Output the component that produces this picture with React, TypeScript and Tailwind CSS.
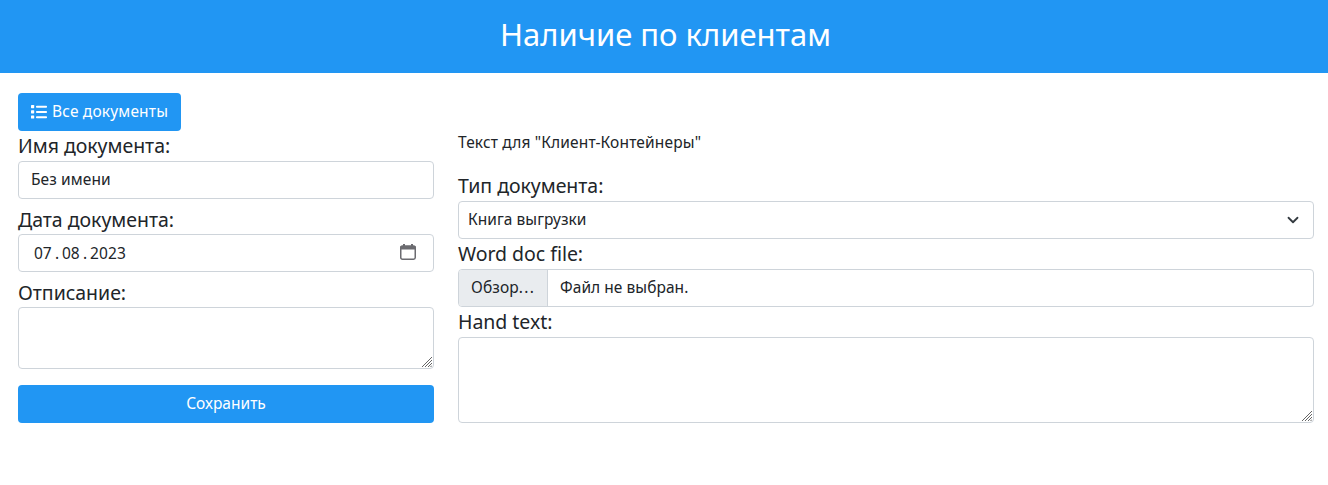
import type { ReactNode } from 'react';

const control = 'w-full rounded-[4px] border border-[#ced4da] bg-white text-[15.5px] text-[#212529]';

function Label({ children, className = '' }: { children: ReactNode; className?: string }) {
  return <label className={`block h-[30px] text-[19.5px] leading-[30px] tracking-[-0.03px] whitespace-nowrap ${className}`}>{children}</label>;
}

function ListIcon() {
  return (
    <svg width="16" height="16" viewBox="0 0 16 16" fill="currentColor" aria-hidden="true">
      <rect x="0" y="1" width="3.200" height="3.200" rx="0.6" />
      <rect x="0" y="6.200" width="3.200" height="3.200" rx="0.6" />
      <rect x="0" y="11.400" width="3.200" height="3.200" rx="0.6" />
      <rect x="5" y="1.700" width="11" height="2" rx="0.800" />
      <rect x="5" y="7" width="11" height="2" rx="0.800" />
      <rect x="5" y="12.200" width="11" height="2" rx="0.800" />
    </svg>
  );
}

function CalendarIcon() {
  return (
    <svg width="16" height="16" viewBox="0 0 16 16" aria-hidden="true">
      <rect x="0.750" y="2.250" width="14.500" height="13" rx="1.700" fill="none" stroke="#6b6b70" strokeWidth="1.500" />
      <path fill="#6b6b70" d="M3 0h2v1.500h6V0h2v1.500h1a2 2 0 0 1 2 2V5.500H0v-2a2 2 0 0 1 2-2h1z" />
    </svg>
  );
}

function TextArea({ className, label }: { className: string; label: string }) {
  return (
    <div className={`relative ${className}`}>
      <textarea aria-label={label} className={`${control} block h-full resize-none px-3 py-1.5 outline-none`} />
      <svg className="pointer-events-none absolute right-[2px] bottom-[2px]" width="10" height="10" viewBox="0 0 10 10" stroke="#666" strokeWidth="1" aria-hidden="true">
        <path d="M0 10L10 0M3 10L10 3M6 10L10 6M8.500 10L10 8.500" />
      </svg>
    </div>
  );
}

export default function App() {
  return (
    <div className="font-['Noto_Sans',sans-serif] text-[15.5px] text-[#212529]">
      <header className="flex h-[73px] items-center justify-center bg-[#2196f3] pb-[5px] pl-[3px] text-white">
        <h1 className="text-[31px] leading-[38px]">Наличие по клиентам</h1>
      </header>
      <main className="flex gap-6 pt-5 pr-3.5 pl-[18px]">
        <section className="flex w-[416px] shrink-0 flex-col">
          <button className="flex h-[38px] w-[163px] items-center gap-[5px] rounded-[4px] bg-[#2196f3] pb-px pl-[13px] tracking-[0.18px] whitespace-nowrap text-white">
            <ListIcon />
            <span>Все документы</span>
          </button>
          <Label>Имя документа:</Label>
          <input className={`${control} h-[38px] px-3 pb-[2px] tracking-[0.1px] outline-none`} defaultValue="Без имени" />
          <Label className="mt-[6px] mb-[-1px]">Дата документа:</Label>
          <div className={`${control} flex h-[38px] items-center pr-[17px] pl-[15px]`}>
            <div className="flex pt-[2px]">
              <span className="w-[18px]">07</span>
              <span className="w-[10px] text-center">.</span>
              <span className="w-[18px]">08</span>
              <span className="w-[10px] text-center">.</span>
              <span className="tracking-[0.15px]">2023</span>
            </div>
            <span className="ml-auto pb-[2px]"><CalendarIcon /></span>
          </div>
          <Label className="mt-[6px] mb-[-1px]">Отписание:</Label>
          <TextArea className="h-[62px]" label="Отписание" />
          <button className="mt-4 h-[38px] rounded-[4px] bg-[#2196f3] text-white">Сохранить</button>
        </section>
        <section className="flex min-w-0 flex-1 flex-col pt-[37px]">
          <p className="mb-[17px] h-6 leading-6 tracking-[0.15px]">Текст для "Клиент-Контейнеры"</p>
          <Label>Тип документа:</Label>
          <div className={`${control} flex h-[38px] items-center justify-between pr-3 pl-[9px]`}>
            <span className="tracking-[0.05px]">Книга выгрузки</span>
            <svg width="16" height="12" viewBox="0 0 16 16" fill="none" stroke="#343a40" strokeWidth="2.400" strokeLinecap="round" strokeLinejoin="round" aria-hidden="true">
              <path d="m2 5 6 6 6-6" />
            </svg>
          </div>
          <Label>Word doc file:</Label>
          <div className={`${control} flex h-[38px] items-center overflow-hidden`}>
            <span className="flex h-full w-[89px] items-center border-r border-[#ced4da] bg-[#e9ecef] pl-3 tracking-[0.1px]">
              Обзор<span className="tracking-[1.3px]">...</span>
            </span>
            <span className="pl-3 tracking-[0.05px]">Файл не выбран.</span>
          </div>
          <Label>Hand text:</Label>
          <TextArea className="h-[86px]" label="Hand text" />
        </section>
      </main>
    </div>
  );
}
